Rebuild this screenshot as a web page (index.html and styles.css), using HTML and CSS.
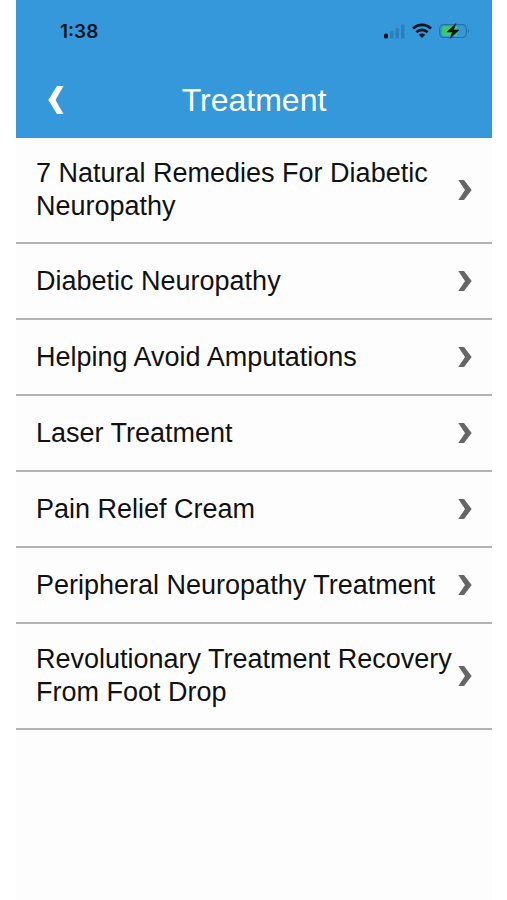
FILE: index.html
```html
<!DOCTYPE html>
<html lang="en">
<head>
  <meta charset="UTF-8" />
  <meta name="viewport" content="width=device-width, initial-scale=1" />
  <title>Treatment</title>
  <link rel="stylesheet" href="styles.css">
</head>
<body>
  <div id="app">
    <header id="header">
      <div class="status-bar">
        <span class="time">1:38</span>
        <div class="status-icons">
          <svg width="21" height="16" viewBox="0 0 21 16" aria-hidden="true">
            <rect x="0" y="10.500" width="4" height="5" rx="1.500" fill="#06131d" />
            <g fill="#2b80b9">
              <rect x="6" y="8" width="3.500" height="7.500" rx="1" />
              <rect x="11.500" y="5" width="3.500" height="10.500" rx="1" />
              <rect x="17" y="1.500" width="3.500" height="14" rx="1" />
            </g>
          </svg>
          <svg width="20" height="16" viewBox="0 0 20 16" fill="none" stroke="#06131d" stroke-width="2.6" aria-hidden="true">
            <path d="M1 5.600C6 .6 14 .6 19 5.600" />
            <path d="M4.400 9.200c3.200-3.100 8-3.100 11.200 0" />
            <path d="M10 15l-3.200-3.200c1.800-1.600 4.600-1.600 6.400 0z" fill="#06131d" stroke="none" />
          </svg>
          <svg width="31" height="16" viewBox="0 0 31 16" aria-hidden="true">
            <rect x=".7" y="1.700" width="26.600" height="12.800" rx="4" fill="none" stroke="#2471a5" stroke-width="1.200" />
            <path d="M5 3.300h13v9.600H5a2 2 0 0 1-2-2V5.300a2 2 0 0 1 2-2z" fill="#3cc86b" />
            <path d="M29 6c1.800.8 1.800 3.400 0 4.200z" fill="#2471a5" />
            <path d="M17 .5L8 9h5.500L11 15.500 20 7h-5.500z" fill="#06131d" stroke="#06131d" stroke-width=".5" />
          </svg>
        </div>
      </div>
      <div class="title-bar">
        <button class="back-btn" aria-label="Back">
          <svg width="16" height="30" viewBox="0 0 16 30" aria-hidden="true">
            <path d="M9 1H15.500L7.500 15l8 14H9L.3 15z" fill="#fff" />
          </svg>
        </button>
        <h1>Treatment</h1>
      </div>
    </header>

    <ul class="list">
      <li><a href="#natural-remedies"><span>7 Natural Remedies For Diabetic Neuropathy</span><svg class="chevron" viewBox="0 0 14 22" aria-hidden="true"><path d="M.3 1H6L13.700 11 6 21H.3L7 11z" /></svg></a></li>
      <li><a href="#diabetic-neuropathy"><span>Diabetic Neuropathy</span><svg class="chevron" viewBox="0 0 14 22" aria-hidden="true"><path d="M.3 1H6L13.700 11 6 21H.3L7 11z" /></svg></a></li>
      <li><a href="#amputations"><span>Helping Avoid Amputations</span><svg class="chevron" viewBox="0 0 14 22" aria-hidden="true"><path d="M.3 1H6L13.700 11 6 21H.3L7 11z" /></svg></a></li>
      <li><a href="#laser"><span>Laser Treatment</span><svg class="chevron" viewBox="0 0 14 22" aria-hidden="true"><path d="M.3 1H6L13.700 11 6 21H.3L7 11z" /></svg></a></li>
      <li><a href="#cream"><span>Pain Relief Cream</span><svg class="chevron" viewBox="0 0 14 22" aria-hidden="true"><path d="M.3 1H6L13.700 11 6 21H.3L7 11z" /></svg></a></li>
      <li><a href="#peripheral"><span>Peripheral Neuropathy Treatment</span><svg class="chevron" viewBox="0 0 14 22" aria-hidden="true"><path d="M.3 1H6L13.700 11 6 21H.3L7 11z" /></svg></a></li>
      <li><a href="#foot-drop"><span>Revolutionary Treatment Recovery From Foot Drop</span><svg class="chevron" viewBox="0 0 14 22" aria-hidden="true"><path d="M.3 1H6L13.700 11 6 21H.3L7 11z" /></svg></a></li>
    </ul>
  </div>
</body>
</html>
```

FILE: styles.css
```css
* {
  box-sizing: border-box;
}

body {
  margin: 0;
  background: #fff;
  color: #111;
  font-family: "Liberation Sans", Helvetica, Arial, sans-serif;
}

#app {
  min-height: 100vh;
  margin: 0 15px 0 16px;
  background: #fdfdfd;
}

#header {
  background: #3498db;
}

.status-bar {
  display: flex;
  align-items: center;
  justify-content: space-between;
  height: 62px;
  padding: 0 22px 0 44px;
}

.time {
  font-family: Inter, sans-serif;
  font-size: 19px;
  font-weight: 600;
  color: #06131d;
}

.status-icons {
  display: flex;
  align-items: center;
  gap: 7px;
}

.title-bar {
  display: grid;
  grid-template-columns: 48px 1fr 48px;
  align-items: center;
  height: 76px;
  padding: 0 16px;
}

.title-bar h1 {
  margin: 0;
  font-size: 32px;
  font-weight: normal;
  line-height: 36px;
  text-align: center;
  color: #fff;
}

.back-btn {
  display: flex;
  align-items: center;
  height: 48px;
  padding: 0 16px;
  background: transparent;
  border: none;
  cursor: pointer;
}

.list {
  list-style: none;
  margin: 0;
  padding: 0;
}

.list a {
  display: flex;
  align-items: center;
  justify-content: space-between;
  min-height: 76px;
  padding: 19px 20px;
  border-bottom: 2px solid #b2b3b4;
  font-size: 27px;
  line-height: 33px;
  color: #111;
  text-decoration: none;
}

.chevron {
  flex: none;
  width: 14px;
  height: 22px;
  fill: #666;
}
```
